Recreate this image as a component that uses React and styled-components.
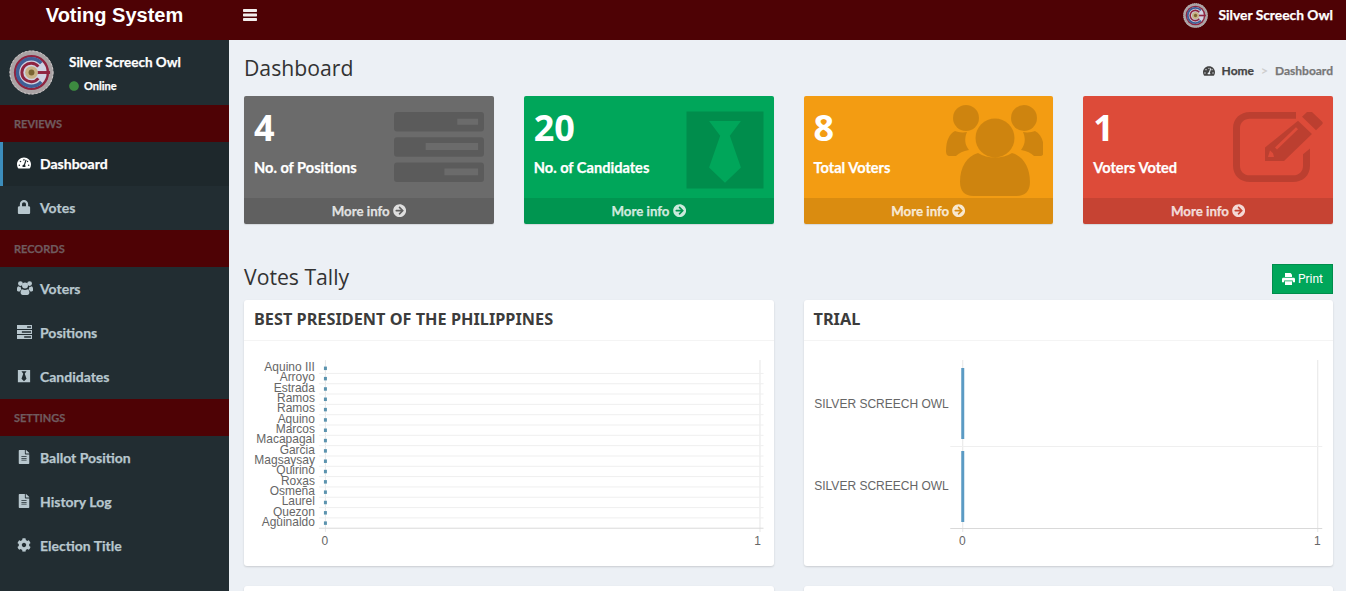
import React from 'react'
import styled, { createGlobalStyle, css } from 'styled-components'
import {
  FaCircle,
  FaTachometerAlt,
  FaLock,
  FaFileAlt,
  FaCog,
  FaArrowCircleRight,
  FaBlackTie,
} from 'react-icons/fa'

const UI_FONT = `Lato, "Noto Sans", Arial, sans-serif`

const GlobalStyle = createGlobalStyle`
  html, body {
    margin: 0;
    height: 591px;
    overflow: hidden;
    background: #ecf0f5;
    font-family: ${UI_FONT};
  }
  * { box-sizing: border-box; }
`

// the reference's bold text sits a bit heavier than Lato 700
const heavy = css`
  font-weight: 700;
  -webkit-text-stroke: 0.25px currentColor;
`

const TopBar = styled.header`
  height: 40px;
  background: #4e0205;
  display: flex;
  align-items: flex-start;
  color: #fff;
`

const Brand = styled.div`
  width: 229px;
  height: 30px;
  text-align: center;
  font: bold 20px/30px "Liberation Sans", Arial, sans-serif;
`

const Burger = styled.div`
  margin-left: 14px;
  height: 30px;
  display: flex;
  align-items: center;
`

const TopUser = styled.div`
  margin-left: auto;
  margin-right: 13px;
  height: 30px;
  display: flex;
  align-items: center;
  gap: 11px;
  font-size: 13.8px;
  line-height: 28px;
  ${heavy}
`

const TopUserName = styled.span`
  padding-top: 1px;
  padding-bottom: 2px;
`

const Layout = styled.div`
  display: grid;
  grid-template-columns: 229px 1fr;
  height: 551px;
`

const Sidebar = styled.aside`
  background: #222d32;
`

const UserPanel = styled.div`
  height: 65px;
  padding: 10px 9px;
  display: flex;
  gap: 15px;
`

const UserText = styled.div`
  padding-top: 4px;
`

const UserName = styled.div`
  color: #fff;
  font-size: 13.5px;
  line-height: 16px;
  ${heavy}
`

const UserStatus = styled.div`
  margin-top: 9px;
  display: flex;
  align-items: center;
  gap: 5px;
  color: #fff;
  font-size: 11px;
  line-height: 14px;
  ${heavy}

  svg {
    color: #3d8b40;
    font-size: 10px;
    stroke-width: 0;
  }
`

const NavHeader = styled.div`
  height: 37px;
  line-height: 37px;
  padding-left: 14px;
  background: #4e0205;
  color: #6f5a5e;
  font-size: 11px;
  ${heavy}
`

const NavItem = styled.div`
  height: 44px;
  padding-bottom: 2px;
  display: flex;
  align-items: center;
  padding-left: ${(p) => (p.$active ? '14px' : '17px')};
  border-left: ${(p) => (p.$active ? '3px solid #3c8dbc' : 'none')};
  background: ${(p) => (p.$active ? '#1e282c' : 'transparent')};
  color: ${(p) => (p.$active ? '#fff' : '#b8c7ce')};
  font-size: 14px;
  ${heavy}
`

const NavIcon = styled.span`
  width: 23px;
  display: flex;
  font-size: 14px;
`

const Content = styled.main`
  padding: 0 13px 0 15px;
`

const PageHead = styled.div`
  height: 56px;
  display: flex;
  align-items: flex-start;
  justify-content: space-between;
`

const PageTitle = styled.h1`
  margin: 13px 0 0;
  font: 400 21.2px/30px "Open Sans", sans-serif;
  color: #333;
`

const Crumbs = styled.div`
  margin-top: 24px;
  display: flex;
  align-items: center;
  font-size: 12px;
  line-height: 14px;
  color: #444;
  ${heavy}

  svg {
    margin-right: 7px;
  }
`

const CrumbSep = styled.span`
  margin: 0 7px;
  color: #ccc;
  font-weight: 400;
`

const CrumbCurrent = styled.span`
  color: #777;
`

const StatGrid = styled.div`
  display: grid;
  grid-template-columns: repeat(4, 1fr);
  column-gap: 30px;
`

const StatBox = styled.div`
  position: relative;
  height: 128px;
  display: flex;
  flex-direction: column;
  overflow: hidden;
  border-radius: 2px;
  background: ${(p) => p.$bg};
  color: #fff;
  box-shadow: 0 1px 1px rgba(0, 0, 0, 0.1);
`

const StatBody = styled.div`
  flex: 1;
  padding: 10px;
`

const StatNumber = styled.div`
  font: 700 36px/44px "Noto Sans", sans-serif;
`

const StatLabel = styled.div`
  margin-top: 9px;
  font-size: 14.6px;
  line-height: 18px;
  ${heavy}
`

const StatIcon = styled.div`
  position: absolute;
  top: ${(p) => p.$top}px;
  right: ${(p) => p.$right}px;
  display: flex;
  color: rgba(0, 0, 0, 0.15);
`

const StatFooter = styled.div`
  height: 26px;
  display: flex;
  align-items: center;
  justify-content: center;
  gap: 3px;
  background: rgba(0, 0, 0, 0.1);
  color: rgba(255, 255, 255, 0.8);
  font-size: 13.3px;
  ${heavy}

  svg {
    stroke-width: 0;
  }
`

const SectionHead = styled.div`
  height: 36px;
  margin-top: 40px;
  display: flex;
  align-items: flex-start;
  justify-content: space-between;
`

const SectionTitle = styled.h2`
  margin: -2px 0 0;
  font: 400 21.2px/30px "Open Sans", sans-serif;
  color: #333;
`

const PrintButton = styled.button`
  width: 61px;
  height: 30px;
  padding: 0;
  display: flex;
  align-items: center;
  justify-content: center;
  gap: 3px;
  background: #00a65a;
  border: 1px solid #008d4c;
  color: #fff;
  font: 400 12px "Roboto", sans-serif;
`

const CardGrid = styled.div`
  display: grid;
  grid-template-columns: 1fr 1fr;
  gap: 20px 30px;
`

const Card = styled.section`
  height: 266px;
  background: #fff;
  border-radius: 3px;
  box-shadow: 0 1px 2px rgba(0, 0, 0, 0.15);
`

const CardHead = styled.div`
  height: 41px;
  padding: 0 10px 2px;
  display: flex;
  align-items: center;
  border-bottom: 1px solid #f4f4f4;
`

const CardTitle = styled.h3`
  margin: 0;
  font: 700 16.3px/20px "Noto Sans", sans-serif;
  color: #3c3c3c;
`

const ChartBox = styled.svg`
  display: block;
  width: 100%;
  height: 225px;
  font-family: "Liberation Sans", Arial, sans-serif;
  font-size: 12px;
`

const BurgerIcon = () => (
  <svg width="14" height="12" viewBox="0 0 14 12" fill="#f3eeee">
    <rect width="14" height="3" rx="0.7" />
    <rect y="4.5" width="14" height="3" rx="0.7" />
    <rect y="9" width="14" height="3" rx="0.7" />
  </svg>
)

const UsersNavIcon = () => (
  <svg width="16" height="14" viewBox="0 0 16 14" fill="currentColor">
    <circle cx="3.4" cy="2.6" r="2.4" />
    <circle cx="12.6" cy="2.6" r="2.4" />
    <circle cx="8" cy="4.6" r="3" />
    <path d="M0 7.6C0 6.3.7 5.5 1.5 5.3c.7.5 1.6.7 2.3.5-.2 1.2.2 2 .9 2.7-.9.4-1.5 1-1.9 1.9H1.2C.5 10.4 0 10 0 9.3zM16 7.6c0-1.3-.7-2.1-1.5-2.3-.7.5-1.6.7-2.3.5.2 1.2-.2 2-.9 2.7.9.4 1.5 1 1.9 1.9h1.6c.7 0 1.2-.4 1.2-1.1z" />
    <path d="M3.6 11.5c0-1.7.7-2.9 1.8-3.3 1.4 1 3.8 1 5.2 0 1.1.4 1.8 1.6 1.8 3.3 0 1.6-.9 2.5-2.2 2.5H5.800c-1.3 0-2.2-.9-2.2-2.5z" />
  </svg>
)

const PrinterIcon = () => (
  <svg width="13" height="12" viewBox="0 0 13 12" fill="currentColor">
    <path d="M3 0h5.5L10 1.5V4H3z" />
    <path d="M1.3 4.7h10.4c.7 0 1.3.6 1.3 1.3v3.2h-2.200V7.4H2.200v1.800H0V6c0-.7.6-1.300 1.300-1.300z" />
    <path d="M3 8.300h7V12H3z" />
  </svg>
)

// round seal used for the avatar
const Seal = ({ size }) => (
  <svg width={size} height={size} viewBox="0 0 46 46">
    <circle cx="23" cy="23" r="22.5" fill="#aaa3a5" />
    <circle cx="23" cy="23" r="22" fill="none" stroke="#d2cfcf" strokeWidth="1" strokeDasharray="2 2" />
    <circle cx="23" cy="23" r="18" fill="#8f2440" />
    <circle cx="23" cy="23" r="15.5" fill="#cfd2e2" />
    <path d="M33 13.5A14 14 0 1 0 33 32.5" fill="none" stroke="#3f5f96" strokeWidth="3.5" />
    <path d="M30 17A9.5 9.5 0 1 0 30 29" fill="none" stroke="#8f2440" strokeWidth="3" />
    <path d="M29 21.5h13v3H29z" fill="#8f2440" />
    <circle cx="23" cy="23" r="6.5" fill="#c7b184" />
    <circle cx="23" cy="23" r="3" fill="#7a6533" />
  </svg>
)

const TasksNavIcon = () => (
  <svg width="15" height="14" viewBox="0 0 92 72" preserveAspectRatio="none" fill="currentColor" fillRule="evenodd">
    <path d="M0 0h92v20H0zM62 6v8h24V6zM0 26h92v20H0zM30 32v8h56v-8zM0 52h92v20H0zM44 58v8h42v-8z" />
  </svg>
)

const TasksIcon = () => (
  <svg width="90" height="70" viewBox="0 0 91 72" preserveAspectRatio="none" fill="currentColor" fillRule="evenodd">
    <path d="M3 0h85a3 3 0 0 1 3 3v14a3 3 0 0 1-3 3H3a3 3 0 0 1-3-3V3a3 3 0 0 1 3-3zM64 7v6h21V7z" />
    <path d="M3 26h85a3 3 0 0 1 3 3v14a3 3 0 0 1-3 3H3a3 3 0 0 1-3-3V29a3 3 0 0 1 3-3zM32 32v7h53v-7z" />
    <path d="M3 52h85a3 3 0 0 1 3 3v14a3 3 0 0 1-3 3H3a3 3 0 0 1-3-3V55a3 3 0 0 1 3-3zM51 58v7h34v-7z" />
  </svg>
)

const PeopleIcon = () => (
  <svg width="97" height="91" viewBox="946 105 97 91" fill="currentColor">
    <circle cx="966" cy="118" r="13" />
    <circle cx="1024" cy="118" r="13" />
    <circle cx="995" cy="138" r="19.5" />
    <path d="M960 182c0-15 7-26 18-29 10 6 24 6 34 0 11 3 18 14 18 29 0 9-5 14-13 14h-44c-8 0-13-5-13-14z" />
    <path d="M955 131c3 1 7 2 12 1-3 7-2 13 2 18-6 1-10 3-13 6h-6c-3 0-4-2-4-5 0-10 3-17 9-20z" />
    <path d="M1035 131c-3 1-7 2-12 1 3 7 2 13-2 18 6 1 10 3 13 6h6c3 0 4-2 4-5 0-10-3-17-9-20z" />
  </svg>
)

const EditIcon = () => (
  <svg width="90" height="71" viewBox="1233 113 90 74" preserveAspectRatio="none" fill="currentColor">
    <path d="M1250 113h46v7h-46c-6 0-10 4-10 10v39c0 6 4 10 10 10h43c6 0 10-4 10-10v-12l7-6v18c0 10-7 17-17 17h-43c-10 0-17-7-17-17v-39c0-10 7-17 17-17z" />
    <path d="M1311 112l11 11c1 1 1 2 0 3l-6 6-14-14 6-6c1-1 2-1 3 0zM1298 122l14 14-28 28h-19v-14zM1296 129l-21 21 2 2 21-21zM1270 153l-2 7h6l-1-4z" fillRule="evenodd" />
  </svg>
)

const stats = [
  { count: 4, label: 'No. of Positions', bg: '#6b6b6b', icon: <TasksIcon />, top: 16, right: 10 },
  { count: 20, label: 'No. of Candidates', bg: '#00a65a', icon: <FaBlackTie size={88} />, top: 10, right: 5 },
  { count: 8, label: 'Total Voters', bg: '#f39c12', icon: <PeopleIcon />, top: 9, right: 10 },
  { count: 1, label: 'Voters Voted', bg: '#dd4b39', icon: <EditIcon />, top: 16, right: 10 },
]

const presidents = [
  'Aquino III', 'Arroyo', 'Estrada', 'Ramos', 'Ramos', 'Aquino', 'Marcos', 'Macapagal',
  'Garcia', 'Magsaysay', 'Quirino', 'Roxas', 'Osmeña', 'Laurel', 'Quezon', 'Aguinaldo',
]

const PresidentChart = () => {
  const rowH = 10.33
  return (
    <ChartBox viewBox="244 341 530 225">
      <path d="M325.5 360V532M760.5 360V532" stroke="#e6e6e6" fill="none" />
      {presidents.map((name, i) => {
        const y = 363 + i * rowH
        return (
          <g key={i}>
            <line x1="319" x2="764" y1={y + rowH} y2={y + rowH} stroke={i === 15 ? '#d9d9d9' : '#efefef'} />
            <rect x="324" y={y + 3.5} width="3" height="3.5" fill="#5b93ae" />
            <text x="315" y={y + 8} textAnchor="end" fill="#666">{name}</text>
          </g>
        )
      })}
      <text x="325" y="545" textAnchor="middle" fill="#666">0</text>
      <text x="758" y="545" textAnchor="middle" fill="#666">1</text>
    </ChartBox>
  )
}

const TrialChart = () => (
  <ChartBox viewBox="804 341 529 225">
    <path d="M962.5 360V532M1317.5 360V532" stroke="#e6e6e6" fill="none" />
    <path d="M950 446.5H1322" stroke="#efefef" fill="none" />
    <path d="M950 528.5H1322" stroke="#d9d9d9" fill="none" />
    <rect x="961" y="368" width="3" height="71" fill="#5b9bc4" />
    <rect x="961" y="451" width="3" height="71" fill="#5b9bc4" />
    <text x="814" y="408" fill="#666">SILVER SCREECH OWL</text>
    <text x="814" y="490" fill="#666">SILVER SCREECH OWL</text>
    <text x="962" y="545" textAnchor="middle" fill="#666">0</text>
    <text x="1317" y="545" textAnchor="middle" fill="#666">1</text>
  </ChartBox>
)

const App = () => (
  <>
    <GlobalStyle />
    <TopBar>
      <Brand>Voting System</Brand>
      <Burger><BurgerIcon /></Burger>
      <TopUser>
        <Seal size={25} />
        <TopUserName>Silver Screech Owl</TopUserName>
      </TopUser>
    </TopBar>
    <Layout>
      <Sidebar>
        <UserPanel>
          <Seal size={45} />
          <UserText>
            <UserName>Silver Screech Owl</UserName>
            <UserStatus><FaCircle />Online</UserStatus>
          </UserText>
        </UserPanel>
        <NavHeader>REVIEWS</NavHeader>
        <NavItem $active><NavIcon><FaTachometerAlt /></NavIcon>Dashboard</NavItem>
        <NavItem><NavIcon><FaLock /></NavIcon>Votes</NavItem>
        <NavHeader>RECORDS</NavHeader>
        <NavItem><NavIcon><UsersNavIcon /></NavIcon>Voters</NavItem>
        <NavItem><NavIcon><TasksNavIcon /></NavIcon>Positions</NavItem>
        <NavItem><NavIcon><FaBlackTie /></NavIcon>Candidates</NavItem>
        <NavHeader>SETTINGS</NavHeader>
        <NavItem><NavIcon><FaFileAlt /></NavIcon>Ballot Position</NavItem>
        <NavItem><NavIcon><FaFileAlt /></NavIcon>History Log</NavItem>
        <NavItem><NavIcon><FaCog /></NavIcon>Election Title</NavItem>
      </Sidebar>
      <Content>
        <PageHead>
          <PageTitle>Dashboard</PageTitle>
          <Crumbs>
            <FaTachometerAlt />Home<CrumbSep>&gt;</CrumbSep><CrumbCurrent>Dashboard</CrumbCurrent>
          </Crumbs>
        </PageHead>
        <StatGrid>
          {stats.map((s) => (
            <StatBox key={s.label} $bg={s.bg}>
              <StatBody>
                <StatNumber>{s.count}</StatNumber>
                <StatLabel>{s.label}</StatLabel>
              </StatBody>
              <StatIcon $top={s.top} $right={s.right}>{s.icon}</StatIcon>
              <StatFooter>More info <FaArrowCircleRight /></StatFooter>
            </StatBox>
          ))}
        </StatGrid>
        <SectionHead>
          <SectionTitle>Votes Tally</SectionTitle>
          <PrintButton><PrinterIcon />Print</PrintButton>
        </SectionHead>
        <CardGrid>
          <Card>
            <CardHead><CardTitle>BEST PRESIDENT OF THE PHILIPPINES</CardTitle></CardHead>
            <PresidentChart />
          </Card>
          <Card>
            <CardHead><CardTitle>TRIAL</CardTitle></CardHead>
            <TrialChart />
          </Card>
          <Card />
          <Card />
        </CardGrid>
      </Content>
    </Layout>
  </>
)

export default App
